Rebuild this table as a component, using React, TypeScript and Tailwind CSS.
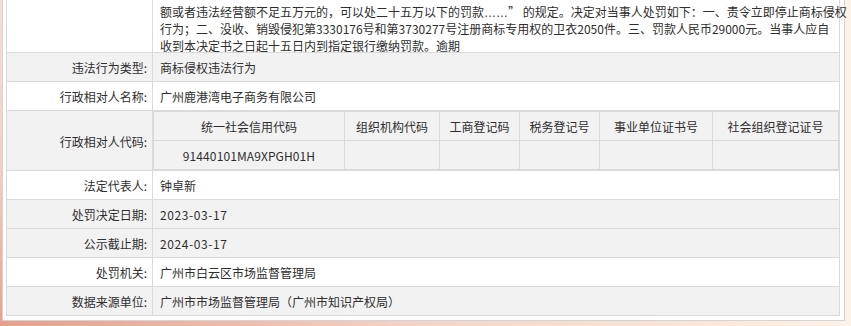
import React from "react";

const FONT = {
  fontFamily: '"Noto Sans CJK SC", "Noto Sans", sans-serif',
};

function Row({
  label,
  children,
  gray,
}: {
  label: string;
  children: React.ReactNode;
  gray?: boolean;
}) {
  return (
    <div
      className={`grid h-[29px] grid-cols-[146px_1fr] border-b border-[#dadada] ${
        gray ? "bg-[#f2f2f2]" : "bg-white"
      }`}
    >
      <div className="flex items-center justify-end border-r border-[#dadada] pr-[5px] pt-[2px]">
        {label}
      </div>
      <div className="flex items-center pl-[7px] pt-[2px] whitespace-nowrap">
        {children}
      </div>
    </div>
  );
}

export default function App() {
  const heads = [
    "统一社会信用代码",
    "组织机构代码",
    "工商登记码",
    "税务登记号",
    "事业单位证书号",
    "社会组织登记证号",
  ];
  const vals = ["91440101MA9XPGH01H", "", "", "", "", ""];
  return (
    <div
      className="h-[326px] w-[851px] overflow-hidden bg-[radial-gradient(ellipse_at_bottom_left,#e6a08d_0%,rgba(240,200,185,0.6)_35%,rgba(253,243,234,0)_70%),linear-gradient(to_right,#f5ddd5,#fdf2e8)] text-[12px] text-[#2e2e2e] [text-spacing-trim:space-all]"
      style={FONT}
    >
      <div className="ml-[2px] w-[843px] border border-t-0 border-[#d4d4d4] bg-white pb-[4px] pl-[3px] pr-[4px]">
        <div className="w-[834px] border-x border-[#dadada]">
          {/* continued text row */}
          <div className="grid h-[53px] grid-cols-[146px_1fr] border-b border-[#dadada] bg-white">
            <div className="border-r border-[#dadada]" />
            <div className="pl-[7px] pt-[4px] leading-[16.4px] whitespace-nowrap">
              <div>
                额或者违法经营额不足五万元的，可以处二十五万以下的罚款
                <span style={{ fontFamily: '"Liberation Sans", sans-serif' }}>
                  ……
                </span>
                ”&nbsp;的规定。决定对当事人处罚如下：一、责令立即停止商标侵权
              </div>
              <div>
                行为；二、没收、销毁侵犯第3330176号和第3730277号注册商标专用权的卫衣2050件。三、罚款人民币29000元。当事人应自
              </div>
              <div>收到本决定书之日起十五日内到指定银行缴纳罚款。逾期</div>
            </div>
          </div>

          <Row label="违法行为类型:" gray>
            商标侵权违法行为
          </Row>
          <Row label="行政相对人名称:">广州鹿港湾电子商务有限公司</Row>

          {/* code row */}
          <div className="grid h-[60px] grid-cols-[146px_1fr] border-b border-[#dadada] bg-[#f2f2f2]">
            <div className="flex items-center justify-end border-r border-[#dadada] pr-[5px] pt-[2px]">
              行政相对人代码:
            </div>
            <div className="grid h-[59px] grid-cols-[191px_95px_80px_80px_113px_1fr] grid-rows-[29px_28px] border border-[#dadada]">
              {heads.map((h, i) => (
                <div
                  key={h}
                  className={`flex items-center justify-center border-b border-[#dadada] pt-[2px] ${
                    i < 5 ? "border-r" : ""
                  }`}
                >
                  {h}
                </div>
              ))}
              {vals.map((v, i) => (
                <div
                  key={i}
                  className={`flex items-center justify-center border-[#dadada] pt-[2px] tracking-[0.1px] ${
                    i < 5 ? "border-r" : ""
                  }`}
                >
                  {v}
                </div>
              ))}
            </div>
          </div>

          <Row label="法定代表人:">钟卓新</Row>
          <Row label="处罚决定日期:" gray>
            <span className="tracking-[0.6px]">2023-03-17</span>
          </Row>
          <Row label="公示截止期:" gray>
            <span className="tracking-[0.6px]">2024-03-17</span>
          </Row>
          <Row label="处罚机关:">广州市白云区市场监督管理局</Row>
          <Row label="数据来源单位:" gray>
            广州市市场监督管理局（广州市知识产权局）
          </Row>
        </div>
      </div>
    </div>
  );
}
